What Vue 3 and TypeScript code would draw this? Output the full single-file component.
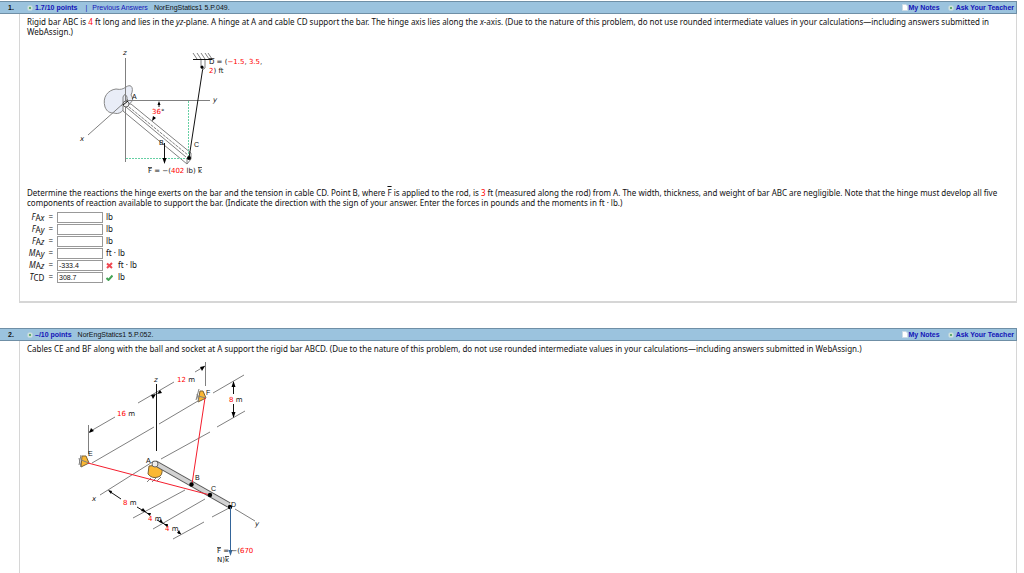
<script setup lang="ts">
import { reactive } from 'vue'

interface AnswerRow {
  id: string
  symbol: string
  point: string
  axis: string
  unit: string
  value: string
  mark: '' | 'wrong' | 'right'
}

const rows = reactive<AnswerRow[]>([
  { id: 'fax', symbol: 'F', point: 'A', axis: 'x', unit: 'lb', value: '', mark: '' },
  { id: 'fay', symbol: 'F', point: 'A', axis: 'y', unit: 'lb', value: '', mark: '' },
  { id: 'faz', symbol: 'F', point: 'A', axis: 'z', unit: 'lb', value: '', mark: '' },
  { id: 'may', symbol: 'M', point: 'A', axis: 'y', unit: 'ft · lb', value: '', mark: '' },
  { id: 'maz', symbol: 'M', point: 'A', axis: 'z', unit: 'ft · lb', value: '-333.4', mark: 'wrong' },
  { id: 'tcd', symbol: 'T', point: 'CD', axis: '', unit: 'lb', value: '308.7', mark: 'right' },
])
</script>

<template>
  <main class="page">
    <section class="question">
      <header class="bar">
        <span class="number">1.</span>
        <svg class="plus" viewBox="0 0 7 7" aria-hidden="true"><circle cx="3.5" cy="3.5" r="3" /><path d="M3.5 2v3M2 3.5h3" /></svg>
        <a href="#points" class="points">1.7/10 points</a>
        <span class="divider">|</span>
        <a href="#previous">Previous Answers</a>
        <span class="source">NorEngStatics1 5.P.049.</span>
        <a href="#notes" class="tool notes"><svg viewBox="0 0 6 7" aria-hidden="true"><path d="M.5.5h3.500l1.500 1.500v4.500h-5z" /></svg>My Notes</a>
        <a href="#teacher" class="tool"><svg class="plus" viewBox="0 0 7 7" aria-hidden="true"><circle cx="3.5" cy="3.5" r="3" /><path d="M3.5 2v3M2 3.5h3" /></svg>Ask Your Teacher</a>
      </header>
      <div class="body">
        <p>Rigid bar ABC is <b>4</b> ft long and lies in the <i>yz</i>-plane. A hinge at A and cable CD support the bar. The hinge axis lies along the <i>x</i>-axis. (Due to the nature of this problem, do not use rounded intermediate values in your calculations—including answers submitted in WebAssign.)</p>

        <svg class="figure hinge" viewBox="70 40 220 142" role="img" aria-label="Bar ABC hinged at A and held by cable CD">
          <path class="blob" d="M105 107C102 97 108 90 116 89C121 90 123 89 126 87C132 83 134 89 131 95C135 101 131 103 126 105C124 111 119 115 114 113C110 113 107 112 105 107Z" />
          <path class="member" d="M131 104L191 153V159L187 164L123 111V104Z" />
          <path class="thin" d="M125.500 58V162M125 100.500H210M125 102L88 135" />
          <path class="guide" d="M126 158.500H188M188.500 101V156" />
          <path class="thin" d="M126 107L186 157M187 158V164" />
          <path class="thin dashed" d="M129 107L188 155" />
          <path class="thin" d="M123 105V97Q125 92 127 97V104M121 106L128 99" />
          <circle class="pin" cx="126" cy="104" r="3" />
          <path class="ink" d="M123 105L128 101" />
          <path class="ink" d="M193 59.500H212M203 67L189 158" />
          <path class="thin" d="M193 53L197 59M197 53L201 59M201 53L205 59M205 53L209 59M208 53L212 59M201 60V68Q203 71 205 68V60" />
          <circle class="dot" cx="202" cy="67" r="1.500" />
          <circle class="dot" cx="189" cy="158" r="2" />
          <path class="ink" d="M164.500 143V162M159 107V103M155 117L153 119" />
          <path class="dot" d="M164.500 164L162.500 158H166.500ZM159 101L157.500 105H160.500ZM152 121L153 116L156 118Z" />
          <text class="axis" x="123" y="55">z</text>
          <text class="axis" x="213" y="102">y</text>
          <text class="axis" x="80" y="141">x</text>
          <text class="point" x="132" y="99">A</text>
          <text class="point" x="159" y="145">B</text>
          <text class="point" x="194" y="147">C</text>
          <text class="red" x="152" y="114">36<tspan class="black">°</tspan></text>
          <text x="209" y="64"><tspan class="vector">D</tspan> = (<tspan class="red">−1.5</tspan>, <tspan class="red">3.5</tspan>,</text>
          <text x="209" y="73"><tspan class="red">2</tspan>) ft</text>
          <text x="148" y="173"><tspan class="vector">F</tspan> = −(<tspan class="red">402</tspan> lb) <tspan class="vector">k</tspan></text>
        </svg>

        <p>Determine the reactions the hinge exerts on the bar and the tension in cable CD. Point B, where <span class="vector">F</span> is applied to the rod, is <b>3</b> ft (measured along the rod) from A. The width, thickness, and weight of bar ABC are negligible. Note that the hinge must develop all five components of reaction available to support the bar. (Indicate the direction with the sign of your answer. Enter the forces in pounds and the moments in ft · lb.)</p>

        <form class="answers" @submit.prevent>
          <div v-for="row in rows" :key="row.id" class="answer">
            <label :for="row.id"><i>{{ row.symbol }}</i><span class="sub">{{ row.point }}<i>{{ row.axis }}</i></span><span class="equals">=</span></label>
            <input :id="row.id" v-model="row.value" type="text" />
            <svg v-if="row.mark" class="mark" :class="row.mark" viewBox="0 0 7 7" role="img" :aria-label="row.mark">
              <path v-if="row.mark === 'wrong'" d="M1 1.500L6 6M6 1L1 6" />
              <path v-else d="M.5 4L2.500 6L6.500 1.500" />
            </svg>
            <span>{{ row.unit }}</span>
          </div>
        </form>
      </div>
    </section>

    <section class="question">
      <header class="bar">
        <span class="number">2.</span>
        <svg class="plus" viewBox="0 0 7 7" aria-hidden="true"><circle cx="3.5" cy="3.5" r="3" /><path d="M3.5 2v3M2 3.5h3" /></svg>
        <a href="#points-2" class="points">–/10 points</a>
        <span class="source">NorEngStatics1 5.P.052.</span>
        <a href="#notes-2" class="tool notes"><svg viewBox="0 0 6 7" aria-hidden="true"><path d="M.5.5h3.500l1.500 1.500v4.500h-5z" /></svg>My Notes</a>
        <a href="#teacher-2" class="tool"><svg class="plus" viewBox="0 0 7 7" aria-hidden="true"><circle cx="3.5" cy="3.5" r="3" /><path d="M3.5 2v3M2 3.5h3" /></svg>Ask Your Teacher</a>
      </header>
      <div class="body">
        <p>Cables CE and BF along with the ball and socket at A support the rigid bar ABCD. (Due to the nature of this problem, do not use rounded intermediate values in your calculations—including answers submitted in WebAssign.)</p>

        <svg class="figure socket" viewBox="70 356 210 214" role="img" aria-label="Bar ABCD on a ball and socket at A with cables CE and BF">
          <path class="thin" d="M205.500 362V386M88.500 425V454M89 432L115 417M138 403L174 382M195 372L205 366M92 463L154 427M159 424L203 398M213 393L244 375M161 459L210 432M217 427L245 411M154 461L100 495M185 490L133 518M205 499L153 529M204 522L173 539M231 507L212 517M235 509L255 521" />
          <path class="ink" d="M156.500 384V451M233.500 382V394M233.500 404V417" />
          <path class="ink" d="M109 491L121 499M137 507L147 513M147 513L150 515M157 520L168 526M178 533L181 534" />
          <path class="dot" d="M89 433L91 428L94 431ZM156 394L151 395L153 399ZM157 394L160 390L162 393ZM205 366L200 367L202 371ZM233.500 381L231.500 387H235.500ZM233.500 418L231.500 412H235.500ZM108 490L112 491L111 494ZM146 512L141 511L143 508ZM147 513L151 513L150 516ZM163 523L159 522L161 519ZM164 524L168 524L167 527ZM181 534L177 533L179 530Z" />
          <path class="base" d="M149 466Q155 464 162 468Q163 476 158 477Q152 479 148 474Z" />
          <path class="thin" d="M151 478L147 482M156 478L152 482M161 477L157 481" />
          <path class="rod-edge" d="M155 463L229 505" />
          <path class="rod" d="M155 463L229 505" />
          <circle class="pin" cx="155" cy="464" r="3" />
          <path class="base" d="M82 456L86 456L89 463L81 467Z" />
          <path class="thin" d="M81 455L79 465M79 458L81 467M81 460L89 463" />
          <path class="base" d="M200 391L203 391L206 398L198 402Z" />
          <path class="thin" d="M199 389L196 400M197 394L199 402M198 396L206 398" />
          <path class="cable" d="M88 463L210 495M205 398L192 484" />
          <circle class="dot" cx="191.500" cy="484.500" r="2.200" />
          <circle class="dot" cx="210" cy="495" r="2.200" />
          <circle class="dot" cx="230" cy="507" r="2.200" />
          <path class="force" d="M230.500 507V552" />
          <path class="force-head" d="M228.500 550H232.500L230.500 556Z" />
          <text class="axis" x="154" y="382">z</text>
          <text class="axis" x="92" y="501">x</text>
          <text class="axis" x="255" y="526">y</text>
          <text class="point" x="206" y="395">F</text>
          <text class="point" x="88" y="456">E</text>
          <text class="point" x="146" y="463">A</text>
          <text class="point" x="195" y="480">B</text>
          <text class="point" x="211" y="491">C</text>
          <text class="point" x="231" y="507">D</text>
          <text x="177" y="382"><tspan class="red">12</tspan> m</text>
          <text x="117" y="416"><tspan class="red">16</tspan> m</text>
          <text x="229" y="402"><tspan class="red">8</tspan> m</text>
          <text x="123" y="505"><tspan class="red">8</tspan> m</text>
          <text x="148" y="521"><tspan class="red">4</tspan> m</text>
          <text x="165" y="531"><tspan class="red">4</tspan> m</text>
          <text x="217" y="553"><tspan class="vector">F</tspan> = −(<tspan class="red">670</tspan></text>
          <text x="217" y="562">N)<tspan class="vector">k</tspan></text>
        </svg>
      </div>
    </section>
  </main>
</template>

<style>
body {
  margin: 0;
  background: #fff;
}
</style>

<style scoped>
.page {
  display: flex;
  flex-direction: column;
  box-sizing: border-box;
  min-height: 100vh;
  padding: 1px 7px 0 0;
  color: #111;
  font-family: "Noto Sans", Verdana, sans-serif;
  font-size: 8px;
  line-height: 10px;
}

.question {
  margin-bottom: 25px;
}

.question:last-child {
  display: flex;
  flex: 1;
  flex-direction: column;
  margin-bottom: 0;
}

.bar {
  display: flex;
  flex: none;
  align-items: center;
  height: 11px;
  border: 1px solid #6f8fa6;
  border-left: 0;
  background: #9bc3de;
  font-family: Arial, "Liberation Sans", sans-serif;
  font-size: 7px;
}

.bar a {
  color: #1414b8;
  text-decoration: none;
}

.number {
  width: 27px;
  padding-left: 8px;
  box-sizing: border-box;
  font-weight: bold;
}

.plus {
  width: 6px;
  height: 6px;
  margin-right: 2px;
}

.plus circle {
  fill: #eef6ee;
  stroke: #b4cfdc;
  stroke-width: 1px;
}

.plus path {
  fill: none;
  stroke: #23883a;
  stroke-width: 1px;
}

.bar .points,
.bar .tool {
  font-weight: bold;
}

.divider {
  margin: 0 5px 0 8px;
  color: #1414b8;
}

.source {
  margin: 0 auto 0 6px;
}

.tool {
  display: flex;
  align-items: center;
  margin-right: 2px;
}

.tool.notes {
  margin-right: 8px;
}

.notes svg {
  width: 6px;
  height: 7px;
  margin-right: 1px;
  fill: #fff;
  stroke: #cbdbe6;
}

.body {
  margin-left: 19px;
  padding: 3px 8px 18px 7px;
  border: solid #d6d6d6;
  border-width: 0 1px 2px;
}

.question:last-child .body {
  flex: 1;
  padding-bottom: 0;
  border-bottom: 0;
}

p {
  margin: 0;
}

b,
.red {
  color: #ff0000;
  fill: #ff0000;
  font-weight: normal;
}

.vector {
  text-decoration: overline;
}

.figure {
  display: block;
  font-family: Verdana, "DejaVu Sans", sans-serif;
  font-size: 7px;
  fill: #111;
}

.hinge {
  width: 220px;
  height: 142px;
  margin: 3px 0 6px 43px;
}

.socket {
  width: 210px;
  height: 214px;
  margin: 2px 0 0 43px;
}

.axis {
  font-size: 7px;
  font-style: italic;
}

.point {
  font-family: Arial, "Liberation Sans", sans-serif;
  font-size: 7px;
}

.black {
  fill: #111;
}

.thin,
.ink,
.guide,
.cable,
.force,
.rod,
.rod-edge {
  fill: none;
  stroke: #808080;
  stroke-width: 1px;
}

.ink {
  stroke: #111;
}

.dashed {
  stroke-dasharray: 3 1;
}

.guide {
  stroke: #66d0a4;
  stroke-dasharray: 2 1;
}

.cable {
  stroke: #f51c2c;
}

.rod-edge {
  stroke: #555;
  stroke-width: 6px;
}

.rod {
  stroke: #d2d2d2;
  stroke-width: 4px;
}

.force {
  stroke: #34659a;
}

.force-head {
  fill: #34659a;
}

.dot {
  fill: #000;
}

.blob {
  fill: #e9edf7;
  stroke: #888;
}

.member {
  fill: #fff;
  stroke: #808080;
}

.pin {
  fill: #eee;
  stroke: #666;
}

.base {
  fill: #fbb833;
  stroke: #7a6238;
}

.answers {
  display: grid;
  margin-top: 3px;
}

.answer {
  display: flex;
  align-items: center;
  height: 12px;
}

label {
  display: flex;
  align-items: center;
  justify-content: flex-end;
  width: 26px;
  margin-right: 4px;
}

.sub {
  padding-top: 2px;
}

.equals {
  margin-left: 4px;
}

input {
  box-sizing: border-box;
  width: 46px;
  height: 11px;
  margin: 0 3px 0 0;
  padding: 0 1px;
  border: 1px solid #999;
  border-radius: 0;
  background: #fff;
  color: #111;
  font: 7px Arial, "Liberation Sans", sans-serif;
}

.mark {
  width: 7px;
  height: 7px;
  margin-right: 5px;
  fill: none;
  stroke: #f04852;
  stroke-width: 2px;
}

.mark.right {
  stroke: #43a355;
}
</style>
